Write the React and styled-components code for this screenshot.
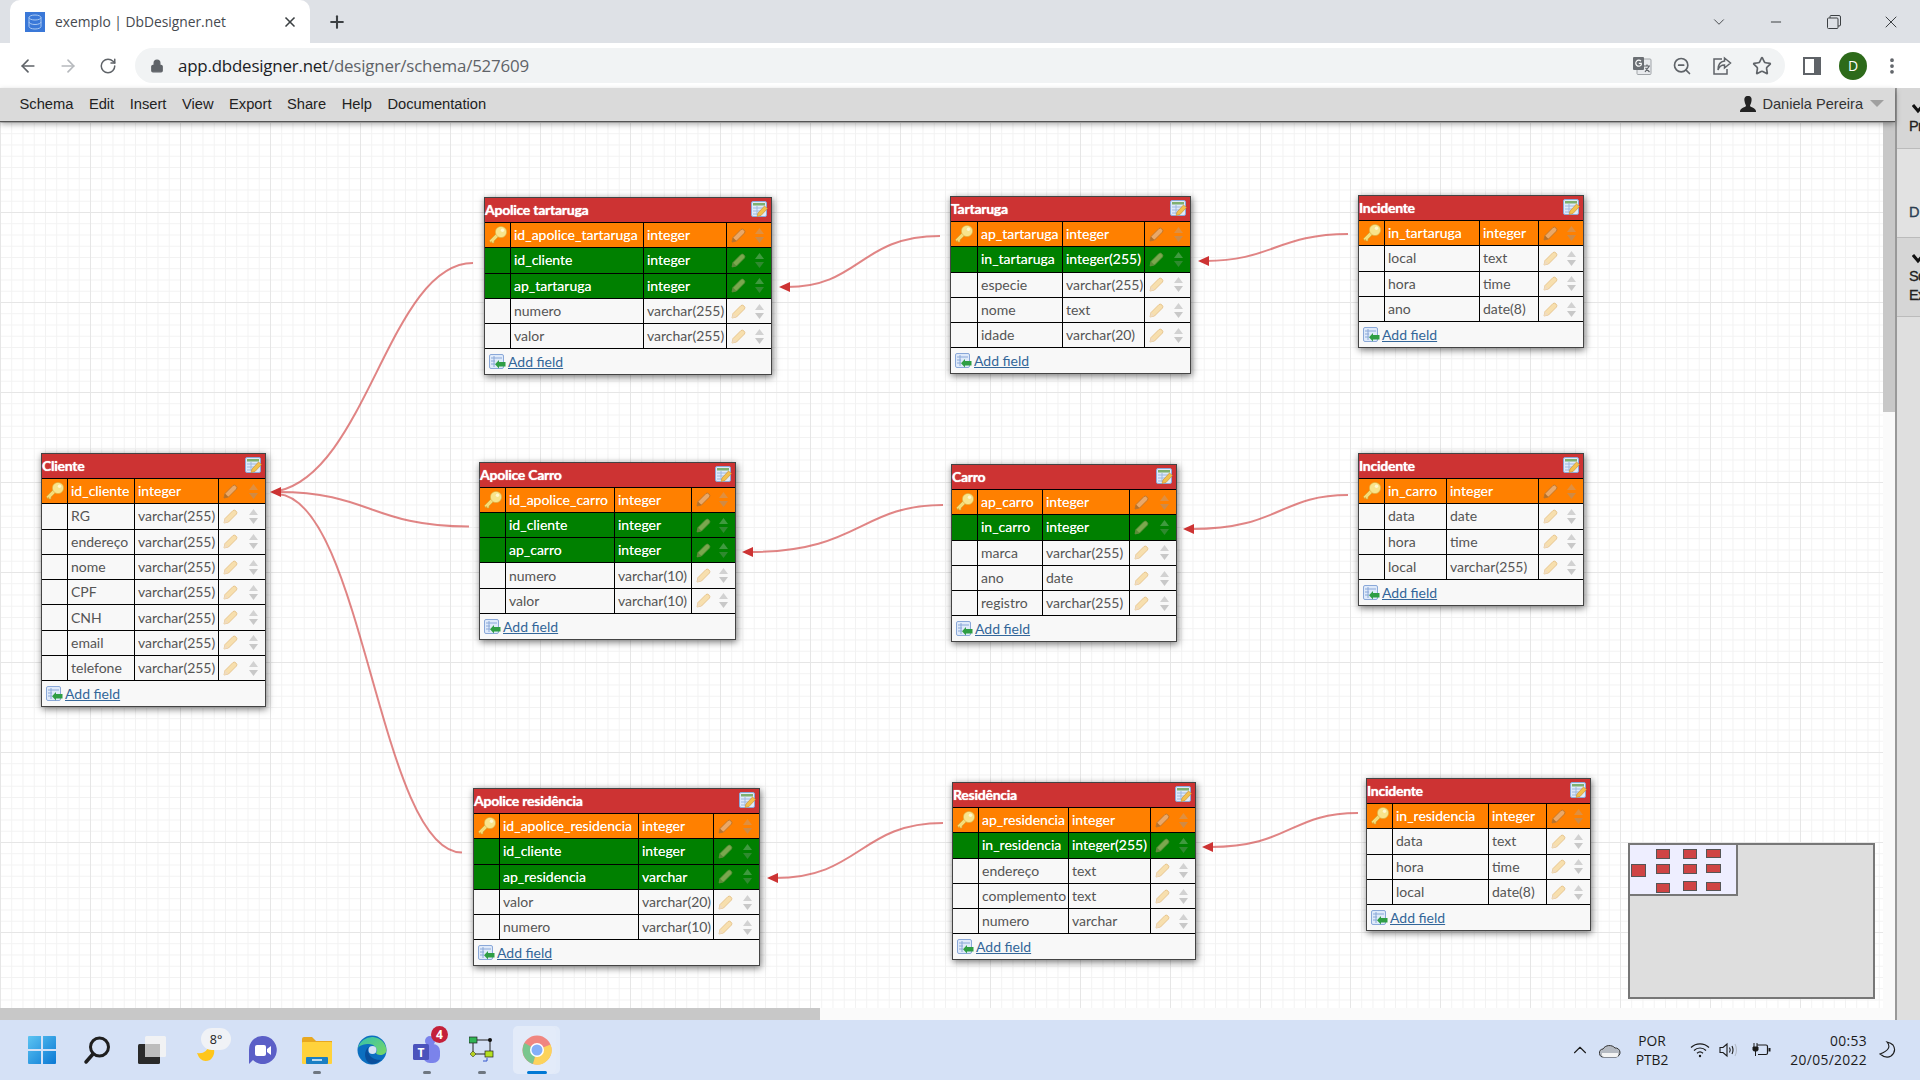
import React from 'react'
import styled, { createGlobalStyle } from 'styled-components'
import { ArrowLeft, ArrowRight, RotateCw, ZoomOut, Star, ChevronDown, ChevronUp, Minus, X, Plus, MoreVertical, Lock } from 'lucide-react'

const Global = createGlobalStyle`
    html, body { margin: 0; padding: 0; overflow: hidden; background: #fff; }
    * { box-sizing: border-box; }
`

const Page = styled.div`
    width: 1920px;
    height: 1080px;
    display: flex;
    flex-direction: column;
    overflow: hidden;
    font-family: "Liberation Sans", Arial, sans-serif;
`

/* browser chrome */
const TabStrip = styled.div`
    height: 43px;
    flex: none;
    background: #dee1e6;
    display: flex;
    align-items: flex-end;
    padding-left: 10px;
`
const Tab = styled.div`
    width: 300px;
    height: 43px;
    background: #fff;
    border-radius: 10px 10px 0 0;
    display: flex;
    align-items: center;
    padding: 0 12px 0 15px;
    gap: 10px;
`
const TabTitle = styled.span`
    flex: 1;
    font: 13.8px "Open Sans", sans-serif;
    color: #45494f;
    white-space: nowrap;
`
const NewTab = styled.div`
    margin-left: 17px;
    height: 43px;
    display: flex;
    align-items: center;
    color: #3c4043;
`
const WinControls = styled.div`
    margin-left: auto;
    height: 43px;
    display: flex;
    align-items: center;
    color: #3c4043;
`
const WinButton = styled.div`
    width: 57.5px;
    display: flex;
    justify-content: center;
`
const Toolbar = styled.div`
    height: 45px;
    flex: none;
    background: #fff;
    display: flex;
    align-items: center;
    padding-left: 16px;
    color: #5f6368;
`
const NavButton = styled.div`
    width: 40px;
    display: flex;
    justify-content: center;
    margin-left: ${({ $first }) => ($first ? '-8.5px' : '0')};
    color: ${({ $dim }) => ($dim ? '#b6b9bd' : '#5f6368')};
`
const Omnibox = styled.div`
    margin-left: 7.5px;
    width: 1650px;
    height: 35px;
    border-radius: 18px;
    background: #f1f3f4;
    display: flex;
    align-items: center;
    padding: 0 13px 0 15px;
`
const Url = styled.span`
    margin-left: 14px;
    font: 16.9px "Open Sans", sans-serif;
    letter-spacing: -0.2px;
    color: #202124;
    white-space: nowrap;
    span { color: #5f6368; }
`
const OmniIcons = styled.div`
    margin-left: auto;
    display: flex;
    align-items: center;
    gap: 20px;
`
const ToolRight = styled.div`
    display: flex;
    align-items: center;
    margin-left: 18px;
    gap: 18px;
`
const MoreBox = styled.div`
    display: flex;
    margin-left: -3px;
`
const Avatar = styled.div`
    width: 28px;
    height: 28px;
    border-radius: 50%;
    background: #2d6a1a;
    color: #fff;
    font: 14px "Open Sans", sans-serif;
    display: flex;
    align-items: center;
    justify-content: center;
`

/* dbdesigner */
const Workspace = styled.div`
    flex: 1;
    display: flex;
    min-height: 0;
`
const Main = styled.div`
    flex: 1;
    display: flex;
    flex-direction: column;
    min-width: 0;
`
const MenuBar = styled.div`
    height: 33px;
    flex: none;
    background: #dadada;
    box-shadow: 0 1px 1px #555, 0 3px 6px rgba(0,0,0,0.35);
    display: flex;
    align-items: center;
    padding: 0 11px 2px 19.5px;
    position: relative;
    z-index: 3;
    gap: 15.5px;
`
const MenuItem = styled.span`
    font-size: 14.7px;
    color: #222;
`
const UserBox = styled.div`
    margin-left: auto;
    display: flex;
    align-items: center;
    gap: 6px;
    color: #333;
    font-size: 14.6px;
`
const Caret = styled.div`
    margin-left: 1px;
    width: 0;
    height: 0;
    border-left: 7px solid transparent;
    border-right: 7px solid transparent;
    border-top: 7px solid #a0a0a0;
`
const CanvasRow = styled.div`
    flex: 1;
    display: flex;
    min-height: 0;
`
const Canvas = styled.div`
    flex: 1;
    position: relative;
    overflow: hidden;
    background-color: #fff;
    background-image:
        linear-gradient(#e6e6e6 1px, transparent 1px),
        linear-gradient(90deg, #e6e6e6 1px, transparent 1px),
        linear-gradient(#f2f2f2 1px, transparent 1px),
        linear-gradient(90deg, #f2f2f2 1px, transparent 1px);
    background-size: 90px 90px, 90px 90px, 11.25px 11.25px, 11.25px 11.25px;
    background-position: 0 1px, 0 0, 0 1px, 0 0;
`
const VScroll = styled.div`
    width: 12px;
    flex: none;
    background: #fafafa;
`
const VThumb = styled.div`
    height: 291px;
    background: #c8c8c8;
`
const HScroll = styled.div`
    height: 12px;
    flex: none;
    background: #fafafa;
`
const HThumb = styled.div`
    width: 820px;
    height: 100%;
    background: #c8c8c8;
`
const SidePanel = styled.div`
    width: 25px;
    flex: none;
    background: #dfdfdf;
    border-left: 2px solid #999;
    overflow: hidden;
    display: flex;
    flex-direction: column;
    font-size: 14.5px;
    letter-spacing: -0.6px;
    -webkit-text-stroke: 0.3px #222;
    color: #222;
`
const SideSection = styled.div`
    height: ${({ $h }) => $h}px;
    flex: none;
    padding: 16px 0 0 12px;
    background: ${({ $plain }) => ($plain ? '#e2e2e2' : '#d6d6d6')};
    border-bottom: 1px solid #bbb;
    line-height: 19px;
    white-space: nowrap;
`
const SideChevron = styled.svg`
    display: block;
    margin: 0 0 3px 3px;
`
const SideLabel = styled.div`
    padding-top: ${({ $top }) => $top || 0}px;
    color: #2a4a6a;
`

/* tables */
const Table = styled.div`
    position: absolute;
    left: ${({ $x }) => $x}px;
    top: ${({ $y }) => $y}px;
    width: ${({ $w }) => $w}px;
    background: #f8f8f8;
    border: 1px solid #444;
    box-shadow: 1px 2px 7px rgba(0,0,0,0.55);
    font-family: Lato, sans-serif;
    font-size: 14px;
`
const TableHead = styled.div`
    height: 24px;
    background: #cd3333;
    display: flex;
    align-items: center;
    justify-content: space-between;
    padding: 0 3px 1px 0;
    color: #fff;
    font-weight: 700;
    font-size: 14px;
    letter-spacing: -0.25px;
    text-shadow: 0 0 1px #fff;
`
const Row = styled.div`
    height: 25.3px;
    display: grid;
    grid-template-columns: ${({ $cols }) => $cols};
    border-top: 1px solid #000;
    background: ${({ $kind }) => ($kind === 'pk' ? '#ff8000' : $kind === 'fk' ? '#008000' : 'transparent')};
    color: ${({ $kind }) => ($kind ? '#fff' : '#555')};
    text-shadow: ${({ $kind }) => ($kind ? '0 0 0.6px rgba(255,255,255,0.7)' : 'none')};
`
const KeyCell = styled.div`
    display: flex;
    align-items: center;
    justify-content: center;
`
const Cell = styled.div`
    border-left: 1px solid #000;
    padding: 0 0 1px 3px;
    display: flex;
    align-items: center;
    white-space: nowrap;
    overflow: hidden;
`
const ActionCell = styled.div`
    border-left: 1px solid #000;
    display: flex;
    align-items: center;
    justify-content: space-between;
    padding: 0 6px 0 4px;
`
const AddRow = styled.div`
    height: 25.7px;
    border-top: 1px solid #000;
    display: flex;
    align-items: center;
    padding-left: 4px;
    gap: 2px;
    font-size: 14px;
    color: #336699;
    text-decoration: underline;
`

const Connectors = styled.svg`
    position: absolute;
    left: 0;
    top: 0;
`

/* minimap */
const MiniMap = styled.div`
    position: absolute;
    left: 1628px;
    top: 722px;
    width: 247px;
    height: 156px;
    background: #dedede;
    border: 2px solid #777;
    z-index: 2;
`
const MiniView = styled.div`
    position: absolute;
    left: -2px;
    top: -2px;
    width: 110px;
    height: 53px;
    background: #eeeeff;
    border: 2px solid #777;
`
const MiniBox = styled.div`
    position: absolute;
    left: ${({ $x }) => $x}px;
    top: ${({ $y }) => $y}px;
    width: ${({ $w }) => $w}px;
    height: ${({ $h }) => $h}px;
    background: #cf4444;
    border: 1px solid #555;
`

/* taskbar */
const Taskbar = styled.div`
    height: 60px;
    flex: none;
    background: #d5e1f6;
    display: flex;
    align-items: center;
    padding: 0 13px 0 14px;
`
const TaskItem = styled.div`
    width: 55px;
    height: 48px;
    position: relative;
    display: flex;
    align-items: center;
    justify-content: center;
`
const ActiveBack = styled.div`
    position: absolute;
    left: 4px;
    top: 0;
    width: 43px;
    height: 48px;
    border-radius: 5px;
    background: rgba(255,255,255,0.35);
    box-shadow: 4px 0 0 rgba(255,255,255,0.3);
`
const Dot = styled.div`
    position: absolute;
    left: 50%;
    bottom: 0;
    transform: translateX(-50%);
    width: ${({ $active }) => ($active ? 20 : 8)}px;
    height: 3px;
    border-radius: 2px;
    background: ${({ $active }) => ($active ? '#0078d4' : '#6e7680')};
`
const Badge = styled.div`
    position: absolute;
    right: 6px;
    top: 0;
    width: 17px;
    height: 17px;
    border-radius: 50%;
    background: #c4203a;
    color: #fff;
    font: bold 12px "Open Sans", sans-serif;
    display: flex;
    align-items: center;
    justify-content: center;
`
const TempBubble = styled.div`
    position: absolute;
    left: 22px;
    top: 2px;
    width: 30px;
    height: 22px;
    border-radius: 11px;
    background: #f0f2f6;
    color: #222;
    font: 12.5px "Open Sans", sans-serif;
    display: flex;
    align-items: center;
    justify-content: center;
`
const Tray = styled.div`
    margin-left: auto;
    display: flex;
    align-items: center;
    color: #1b1b1b;
    font: 13.8px "Open Sans", sans-serif;
`
const TrayIcon = styled.div`
    width: ${({ $w }) => $w}px;
    display: flex;
    justify-content: center;
`
const TrayText = styled.div`
    width: ${({ $w }) => $w}px;
    margin-right: ${({ $mr }) => $mr || 0}px;
    text-align: ${({ $right }) => ($right ? 'right' : 'center')};
    letter-spacing: ${({ $right }) => ($right ? '0.35px' : '0')};
    line-height: 19px;
    white-space: nowrap;
`

const KeyIcon = () => (
    <svg width="20" height="20" viewBox="0 0 20 20">
        <path d="M1.5 15.5 L9 8 L11.5 10.5 L6 16 L6 18 L4 18 L3.5 16.5 L2.5 17.5 Z" fill="#f5dc78" stroke="#cfa535" strokeWidth="0.6" />
        <circle cx="13" cy="7" r="5.6" fill="#f8e48c" stroke="#d8b040" strokeWidth="0.6" />
        <circle cx="14.5" cy="5.2" r="1.7" fill="#fff8d0" />
    </svg>
)

const Pencil = ({ kind }) => {
    const body = kind === 'pk' ? '#eaa868' : kind === 'fk' ? '#7aa84e' : '#f7dfae'
    const edge = kind === 'pk' ? '#b5702a' : kind === 'fk' ? '#5c8a3a' : '#e2bd80'
    return (
        <svg width="15" height="15" viewBox="0 0 15 15" style={{ flex: 'none' }}>
            <path d="M1 14 L2 9.5 L10 1.5 Q11.5 0.5 13 2 Q14.5 3.5 13.5 5 L5.5 13 Z" fill={body} stroke={edge} strokeWidth="0.8" />
            <path d="M1 14 L2 9.5 L5.5 13 Z" fill={kind ? edge : '#f0dcc0'} />
        </svg>
    )
}

const Arrows = ({ kind }) => {
    const top = kind === 'pk' ? '#e08f3f' : kind === 'fk' ? '#3f9a3f' : '#d2d2d2'
    return (
        <svg width="11" height="17" viewBox="0 0 11 17" style={{ flex: 'none' }}>
            <path d="M5.5 1 L10 7 L1 7 Z" fill={top} />
            <path d="M5.5 16 L10 10 L1 10 Z" fill={kind === 'pk' ? '#cf8a45' : kind === 'fk' ? '#2f8a2f' : '#c8c8c8'} />
        </svg>
    )
}

const SheetIcon = () => (
    <svg width="17" height="17" viewBox="0 0 17 17" style={{ flex: 'none' }}>
        <rect x="0.5" y="0.5" width="15" height="15" rx="1.5" fill="#dfeafa" stroke="#8aa8d8" />
        <rect x="2" y="2" width="12" height="2.5" fill="#7fb06f" />
        <path d="M2 7H13M2 10H10M2 13H8M6 5V14" stroke="#9db8e0" strokeWidth="1" />
        <path d="M6 15.5 L7 12 L13.5 5 L16.5 7.5 L10 14.5 Z" fill="#f2c14e" stroke="#c98a2a" strokeWidth="0.6" />
    </svg>
)

const AddIcon = () => (
    <svg width="17" height="17" viewBox="0 0 17 17" style={{ flex: 'none' }}>
        <rect x="0.5" y="1.5" width="14" height="14" rx="1.5" fill="#dfeafa" stroke="#8aa8d8" />
        <path d="M2 5H13M2 8H6M2 11H6M5 3V14" stroke="#8aa8d8" strokeWidth="1" />
        <path d="M16.5 9 V13.5 H10 V15.5 L6 11.3 L10 7 V9 Z" fill="#2f9e44" />
    </svg>
)

const TranslateIcon = () => (
    <svg width="20" height="20" viewBox="0 0 20 20">
        <rect x="5" y="3" width="14" height="15.5" rx="1" fill="#e8eaed" stroke="#a0a4a8" />
        <rect x="1" y="1" width="11" height="13" rx="1" fill="#6b6f74" />
        <path d="M9 5.2 A3 3 0 1 0 9.2 9 V7.4 H6.8" fill="none" stroke="#fff" strokeWidth="1.2" />
        <path d="M12 10 H18 M15 8.5 V10 M13 16 L17 10.5 M13.5 12 L17.5 16" stroke="#5f6368" strokeWidth="1.2" fill="none" />
    </svg>
)
const ShareIcon = () => (
    <svg width="20" height="20" viewBox="0 0 20 20" fill="none" stroke="#5f6368" strokeWidth="1.5">
        <path d="M10 3 H2 V18 H15 V13" />
        <path d="M12.5 2 L18.5 7 L12.5 12 V9 C9 9 7 11 6 14 C6 9 8 5.5 12.5 5 Z" />
    </svg>
)
const SideBarIcon = () => (
    <svg width="18" height="18" viewBox="0 0 18 18">
        <rect width="18" height="18" fill="#5f6368" />
        <rect x="2" y="2" width="9" height="14" fill="#fff" />
    </svg>
)
const RestoreIcon = () => (
    <svg width="14" height="14" viewBox="0 0 14 14" fill="none" stroke="#3c4043" strokeWidth="1">
        <rect x="0.5" y="3" width="10.5" height="10.5" rx="1" />
        <path d="M3 3 V1.5 Q3 0.5 4 0.5 H12 Q13.5 0.5 13.5 2 V10 Q13.5 11 12 11 H11" />
    </svg>
)
const Favicon = () => (
    <svg width="20" height="20" viewBox="0 0 20 20" style={{ flex: 'none' }}>
        <rect width="20" height="20" fill="#3a78d8" />
        <ellipse cx="10" cy="5.5" rx="6" ry="2.5" fill="none" stroke="#a8c8f2" />
        <path d="M4 5.5 V14.5 A6 2.5 0 0 0 16 14.5 V5.5 M4 10 A6 2.5 0 0 0 16 10" fill="none" stroke="#a8c8f2" />
    </svg>
)

const WindowsLogo = () => (
    <svg width="30" height="30" viewBox="0 0 30 30">
        <defs>
            <linearGradient id="win" x1="0" y1="0" x2="1" y2="1">
                <stop offset="0" stopColor="#5cc4f2" />
                <stop offset="1" stopColor="#0a78d4" />
            </linearGradient>
        </defs>
        <path d="M1 2 Q1 1 2 1 H14 V14 H1 Z M16 1 H28 Q29 1 29 2 V14 H16 Z M1 16 H14 V29 H2 Q1 29 1 28 Z M16 16 H29 V28 Q29 29 28 29 H16 Z" fill="url(#win)" />
    </svg>
)
const SearchGlyph = () => (
    <svg width="30" height="30" viewBox="0 0 30 30" fill="none" stroke="#1f1f1f">
        <circle cx="17.5" cy="12" r="9" strokeWidth="3" />
        <path d="M11 19 L4 27" strokeWidth="3.5" strokeLinecap="round" />
    </svg>
)
const TaskView = () => (
    <svg width="30" height="30" viewBox="0 0 30 30">
        <rect x="1" y="9" width="22" height="20" rx="1.5" fill="#2a2a2a" />
        <rect x="8" y="1" width="21" height="21" rx="1.5" fill="#f4f4f4" fillOpacity="0.9" />
        <rect x="8" y="9" width="15" height="13" fill="#bdbdbd" />
    </svg>
)
const MoonGlyph = () => (
    <svg width="30" height="30" viewBox="0 0 30 30">
        <path d="M5 18 Q14 20 19 8 Q26 18 18 25 Q9 29 5 18 Z" fill="#ffc61a" />
        <rect x="16" y="11" width="3" height="3" fill="#e02020" />
    </svg>
)
const MeetGlyph = () => (
    <svg width="30" height="30" viewBox="0 0 30 30">
        <path d="M15 1 A14 14 0 1 1 6 25 L2 29 V15 A13 14 0 0 1 15 1 Z" fill="#5b5fc7" />
        <rect x="8" y="10" width="11" height="11" rx="2" fill="#fff" />
        <path d="M20 14 L24 11 V20 L20 17 Z" fill="#fff" />
    </svg>
)
const FolderGlyph = () => (
    <svg width="30" height="30" viewBox="0 0 30 30">
        <path d="M0 4 Q0 2 2 2 H10 L14 6 H30 V10 H0 Z" fill="#e8a820" />
        <rect y="7" width="30" height="22" rx="1" fill="#ffd23c" />
        <rect x="4" y="22" width="22" height="7" rx="1" fill="#1a7fc4" />
        <rect x="10" y="24" width="10" height="2" fill="#fff" fillOpacity="0.7" />
    </svg>
)
const EdgeGlyph = () => (
    <svg width="30" height="30" viewBox="0 0 30 30">
        <defs>
            <linearGradient id="edge" x1="0" y1="0" x2="1" y2="1">
                <stop offset="0" stopColor="#35c1b0" />
                <stop offset="1" stopColor="#7ad860" />
            </linearGradient>
        </defs>
        <circle cx="15" cy="15" r="14.5" fill="#0c6fc0" />
        <path d="M1 13 A14.5 14.5 0 0 1 29.5 15 C29.5 21 20 21 19 18 C22 14 17 9 12 9 C7 9 3 10 1 13 Z" fill="url(#edge)" />
        <path d="M12 12 C9 17 13 25 24 25 A14 14 0 0 1 14 29 C7 27 6 15 12 12 Z" fill="#0a4f9c" />
        <circle cx="15.5" cy="15" r="4" fill="#d5e1f6" />
    </svg>
)
const TeamsGlyph = () => (
    <svg width="30" height="30" viewBox="0 0 30 30">
        <circle cx="18" cy="6" r="5" fill="#7b83eb" />
        <rect x="11" y="9" width="17" height="19" rx="7" fill="#7b83eb" />
        <rect x="1" y="9" width="16" height="16" rx="1.5" fill="#4b53bc" />
        <text x="9" y="22" textAnchor="middle" fill="#fff" fontSize="12" fontWeight="700" fontFamily="Open Sans">T</text>
    </svg>
)
const FlowGlyph = () => (
    <svg width="26" height="28" viewBox="0 0 26 28">
        <path d="M4 4 H21 M4 4 V18 H20 M21 4 V18" stroke="#222" fill="none" />
        <rect x="0" y="1" width="8" height="6" fill="#31b454" stroke="#222" strokeWidth="0.7" />
        <circle cx="21" cy="4" r="2" fill="#111" />
        <path d="M4 15 L7 18 L4 21 L1 18 Z" fill="#b4d020" stroke="#222" strokeWidth="0.5" />
        <rect x="16" y="15" width="8" height="6" fill="#b4e020" stroke="#222" strokeWidth="0.7" />
        <path d="M18 25 H14 M18 25 V22" stroke="#3355cc" />
    </svg>
)
const ChromeGlyph = () => (
    <svg width="30" height="30" viewBox="0 0 30 30">
        <circle cx="15" cy="15" r="14.5" fill="#e8453c" />
        <path d="M15 15 L2.5 8 A14.5 14.5 0 0 0 11 29 Z" fill="#34a853" />
        <path d="M15 15 L28.5 9.5 A14.5 14.5 0 0 1 11 29 Z" fill="#fbbc05" />
        <circle cx="15" cy="15" r="7" fill="#fff" />
        <circle cx="15" cy="15" r="5.5" fill="#4285f4" />
    </svg>
)
const CloudGlyph = () => (
    <svg width="22" height="15" viewBox="0 0 22 15">
        <path d="M5 14 A4 4 0 0 1 4 6 A7 6 0 0 1 16 5 A4.5 4.5 0 0 1 17 14 Z" fill="#b5bac2" stroke="#333" strokeWidth="1" />
        <path d="M3 10 H19 V13 Q19 14 17 14 H5 Q3 14 3 12 Z" fill="#f4f4f4" />
    </svg>
)
const WifiGlyph = () => (
    <svg width="20" height="16" viewBox="0 0 20 16" fill="none" stroke="#1b1b1b" strokeWidth="1.2">
        <path d="M1 5.5 A13 13 0 0 1 19 5.5 M4 8.5 A8.5 8.5 0 0 1 16 8.5 M7 11.3 A4.5 4.5 0 0 1 13 11.3" />
        <circle cx="10" cy="14" r="1.2" fill="#1b1b1b" stroke="none" />
    </svg>
)
const SpeakerGlyph = () => (
    <svg width="20" height="16" viewBox="0 0 20 16" fill="none" stroke="#1b1b1b" strokeWidth="1.1">
        <path d="M1 5.5 H4 L8 2 V14 L4 10.5 H1 Z" />
        <path d="M10.5 5.5 Q12 8 10.5 10.5 M13 4 Q15 8 13 12" />
        <path d="M16 2 Q19 8 16 14" stroke="#b5bcc8" />
    </svg>
)
const BatteryGlyph = () => (
    <svg width="20" height="16" viewBox="0 0 20 16" fill="none" stroke="#1b1b1b" strokeWidth="1.2">
        <path d="M6 3 H15 Q16.5 3 16.5 4.5 V11 Q16.5 12.5 15 12.5 H7" />
        <rect x="17.5" y="6" width="2" height="3.5" fill="#1b1b1b" stroke="none" />
        <path d="M2 5 H7 V8 Q7 9 5 9 H4 Q2 9 2 8 Z M3 1 V5 M6 1 V5 M4.5 9 V14" fill="#1b1b1b" strokeWidth="1" />
    </svg>
)
const MoonOutline = () => (
    <svg width="18" height="18" viewBox="0 0 18 18" fill="none" stroke="#1b1b1b" strokeWidth="1.1">
        <path d="M9 1 Q15 8 2 13 Q8 18 13 15 Q19 10 15 4 Q13 2 9 1 Z" />
    </svg>
)

const CANVAS_TOP = 121

const tables = [
    {
        title: 'Apolice tartaruga', x: 484, y: 197, w: 288, cols: [26, 133, 83], rows: [
            ['id_apolice_tartaruga', 'integer', 'pk'], ['id_cliente', 'integer', 'fk'], ['ap_tartaruga', 'integer', 'fk'],
            ['numero', 'varchar(255)'], ['valor', 'varchar(255)'],
        ],
    },
    {
        title: 'Tartaruga', x: 950, y: 196, w: 241, cols: [27, 85, 82], rows: [
            ['ap_tartaruga', 'integer', 'pk'], ['in_tartaruga', 'integer(255)', 'fk'], ['especie', 'varchar(255)'],
            ['nome', 'text'], ['idade', 'varchar(20)'],
        ],
    },
    {
        title: 'Incidente', x: 1358, y: 195, w: 226, cols: [26, 95, 59], rows: [
            ['in_tartaruga', 'integer', 'pk'], ['local', 'text'], ['hora', 'time'], ['ano', 'date(8)'],
        ],
    },
    {
        title: 'Cliente', x: 41, y: 453, w: 225, cols: [26, 67, 84], rows: [
            ['id_cliente', 'integer', 'pk'], ['RG', 'varchar(255)'], ['endereço', 'varchar(255)'], ['nome', 'varchar(255)'],
            ['CPF', 'varchar(255)'], ['CNH', 'varchar(255)'], ['email', 'varchar(255)'], ['telefone', 'varchar(255)'],
        ],
    },
    {
        title: 'Apolice Carro', x: 479, y: 461.6, w: 257, cols: [26, 109, 77], rows: [
            ['id_apolice_carro', 'integer', 'pk'], ['id_cliente', 'integer', 'fk'], ['ap_carro', 'integer', 'fk'],
            ['numero', 'varchar(10)'], ['valor', 'varchar(10)'],
        ],
    },
    {
        title: 'Carro', x: 951, y: 464, w: 226, cols: [26, 65, 87], rows: [
            ['ap_carro', 'integer', 'pk'], ['in_carro', 'integer', 'fk'], ['marca', 'varchar(255)'],
            ['ano', 'date'], ['registro', 'varchar(255)'],
        ],
    },
    {
        title: 'Incidente', x: 1358, y: 453, w: 226, cols: [26, 62, 92], rows: [
            ['in_carro', 'integer', 'pk'], ['data', 'date'], ['hora', 'time'], ['local', 'varchar(255)'],
        ],
    },
    {
        title: 'Apolice residência', x: 473, y: 788, w: 287, cols: [26, 139, 75], rows: [
            ['id_apolice_residencia', 'integer', 'pk'], ['id_cliente', 'integer', 'fk'], ['ap_residencia', 'varchar', 'fk'],
            ['valor', 'varchar(20)'], ['numero', 'varchar(10)'],
        ],
    },
    {
        title: 'Residência', x: 952, y: 782, w: 244, cols: [26, 90, 82], rows: [
            ['ap_residencia', 'integer', 'pk'], ['in_residencia', 'integer(255)', 'fk'], ['endereço', 'text'],
            ['complemento', 'text'], ['numero', 'varchar'],
        ],
    },
    {
        title: 'Incidente', x: 1366, y: 778, w: 225, cols: [26, 96, 58], rows: [
            ['in_residencia', 'integer', 'pk'], ['data', 'text'], ['hora', 'time'], ['local', 'date(8)'],
        ],
    },
]

const curves = [
    'M473 263 C390 263 367 472 278 491',
    'M469 526.6 C370 526 370 492 278 492',
    'M462 852.6 C380 852 363 500 278 494',
    'M940 236 C860 236 860 287 787 287',
    'M1348 234 C1280 234 1270 261 1206 261',
    'M943 505 C860 505 860 552 750 552',
    'M1348 495 C1280 495 1280 529 1191 529',
    'M943 823 C860 823 860 878 775 878',
    'M1358 813 C1290 813 1290 847 1210 847',
]
const arrows = [[270, 492], [779, 287], [1198, 261], [742, 552], [1183, 529], [767, 878], [1202, 847]]

const miniBoxes = [
    [1, 19, 15, 13], [26, 4, 14, 10], [26, 19, 14, 10], [26, 38, 14, 10], [53, 4, 14, 10], [53, 19, 14, 10],
    [53, 36, 14, 10], [76, 4, 15, 9], [76, 19, 15, 9], [76, 37, 15, 9],
]

const DbTable = ({ table }) => {
    // the measured key column includes the table's own left border
    const cols = `${table.cols[0] - 1}px ${table.cols[1]}px ${table.cols[2]}px 1fr`
    return (
        <Table $x={table.x} $y={table.y - CANVAS_TOP} $w={table.w}>
            <TableHead>{table.title}<SheetIcon /></TableHead>
            {table.rows.map(([name, type, kind]) => (
                <Row key={name} $cols={cols} $kind={kind}>
                    <KeyCell>{kind === 'pk' && <KeyIcon />}</KeyCell>
                    <Cell>{name}</Cell>
                    <Cell>{type}</Cell>
                    <ActionCell>
                        <Pencil kind={kind} />
                        <Arrows kind={kind} />
                    </ActionCell>
                </Row>
            ))}
            <AddRow><AddIcon />Add field</AddRow>
        </Table>
    )
}

const Chevron = () => (
    <SideChevron width="16" height="10" viewBox="0 0 16 10" fill="none" stroke="#111" strokeWidth="3">
        <path d="M1 1 L6 7 L15 -3" />
    </SideChevron>
)

const menus = ['Schema', 'Edit', 'Insert', 'View', 'Export', 'Share', 'Help', 'Documentation']

const App = () => (
    <Page>
        <Global />
        <TabStrip>
            <Tab>
                <Favicon />
                <TabTitle>exemplo | DbDesigner.net</TabTitle>
                <X size={16} color="#3c4043" strokeWidth={2.5} />
            </Tab>
            <NewTab><Plus size={20} strokeWidth={2.5} /></NewTab>
            <WinControls>
                <WinButton><ChevronDown size={18} strokeWidth={1.2} /></WinButton>
                <WinButton><Minus size={16} strokeWidth={1.5} /></WinButton>
                <WinButton><RestoreIcon /></WinButton>
                <WinButton><X size={20} strokeWidth={1.2} /></WinButton>
            </WinControls>
        </TabStrip>
        <Toolbar>
            <NavButton $first><ArrowLeft size={20} /></NavButton>
            <NavButton $dim><ArrowRight size={20} /></NavButton>
            <NavButton><RotateCw size={18} /></NavButton>
            <Omnibox>
                <Lock size={14} fill="#5f6368" />
                <Url>app.dbdesigner.net<span>/designer/schema/527609</span></Url>
                <OmniIcons>
                    <TranslateIcon />
                    <ZoomOut size={20} />
                    <ShareIcon />
                    <Star size={20} />
                </OmniIcons>
            </Omnibox>
            <ToolRight>
                <SideBarIcon />
                <Avatar>D</Avatar>
                <MoreBox><MoreVertical size={20} strokeWidth={2.5} /></MoreBox>
            </ToolRight>
        </Toolbar>
        <Workspace>
            <Main>
                <MenuBar>
                    {menus.map(m => <MenuItem key={m}>{m}</MenuItem>)}
                    <UserBox>
                        <svg width="16" height="16" viewBox="0 0 16 16">
                            <path d="M8 0 C11 0 12 2 11.5 5 C11 8 10 9 10 10 C11 11.5 15 11.5 16 15 V16 H0 V15 C1 11.5 5 11.5 6 10 C6 9 5 8 4.5 5 C4 2 5 0 8 0 Z" fill="#222" />
                        </svg>
                        Daniela Pereira
                        <Caret />
                    </UserBox>
                </MenuBar>
                <CanvasRow>
                    <Canvas>
                        <Connectors width="1883" height="887" viewBox={`0 ${CANVAS_TOP} 1883 887`}>
                            {curves.map(d => <path key={d} d={d} fill="none" stroke="#cd3333" strokeOpacity="0.6" strokeWidth="2" />)}
                            {arrows.map(([x, y]) => (
                                <polygon key={x} points={`${x},${y} ${x + 11},${y - 5} ${x + 11},${y + 5}`} fill="#cd3333" />
                            ))}
                        </Connectors>
                        {tables.map(t => <DbTable key={t.x + '-' + t.y} table={t} />)}
                        <MiniMap>
                            <MiniView />
                            {miniBoxes.map(([x, y, w, h]) => <MiniBox key={x + '-' + y} $x={x} $y={y} $w={w} $h={h} />)}
                        </MiniMap>
                    </Canvas>
                    <VScroll><VThumb /></VScroll>
                </CanvasRow>
                <HScroll><HThumb /></HScroll>
            </Main>
            <SidePanel>
                <SideSection $h={61}><Chevron />Pr</SideSection>
                <SideSection $h={89} $plain><SideLabel $top={38}>D</SideLabel></SideSection>
                <SideSection $h={79}><Chevron />So<br />Ex</SideSection>
            </SidePanel>
        </Workspace>
        <Taskbar>
            <TaskItem><WindowsLogo /></TaskItem>
            <TaskItem><SearchGlyph /></TaskItem>
            <TaskItem><TaskView /></TaskItem>
            <TaskItem><MoonGlyph /><TempBubble>8°</TempBubble></TaskItem>
            <TaskItem><MeetGlyph /></TaskItem>
            <TaskItem><FolderGlyph /><Dot /></TaskItem>
            <TaskItem><EdgeGlyph /></TaskItem>
            <TaskItem><TeamsGlyph /><Badge>4</Badge><Dot /></TaskItem>
            <TaskItem><FlowGlyph /><Dot /></TaskItem>
            <TaskItem><ActiveBack /><ChromeGlyph /><Dot $active /></TaskItem>
            <Tray>
                <TrayIcon $w={26}><ChevronUp size={22} strokeWidth={1.2} /></TrayIcon>
                <TrayIcon $w={34}><CloudGlyph /></TrayIcon>
                <TrayText $w={50} $mr={8}>POR<br />PTB2</TrayText>
                <TrayIcon $w={30}><WifiGlyph /></TrayIcon>
                <TrayIcon $w={28}><SpeakerGlyph /></TrayIcon>
                <TrayIcon $w={36}><BatteryGlyph /></TrayIcon>
                <TrayText $w={88} $right>00:53<br />20/05/2022</TrayText>
                <TrayIcon $w={40}><MoonOutline /></TrayIcon>
            </Tray>
        </Taskbar>
    </Page>
)

export default App
